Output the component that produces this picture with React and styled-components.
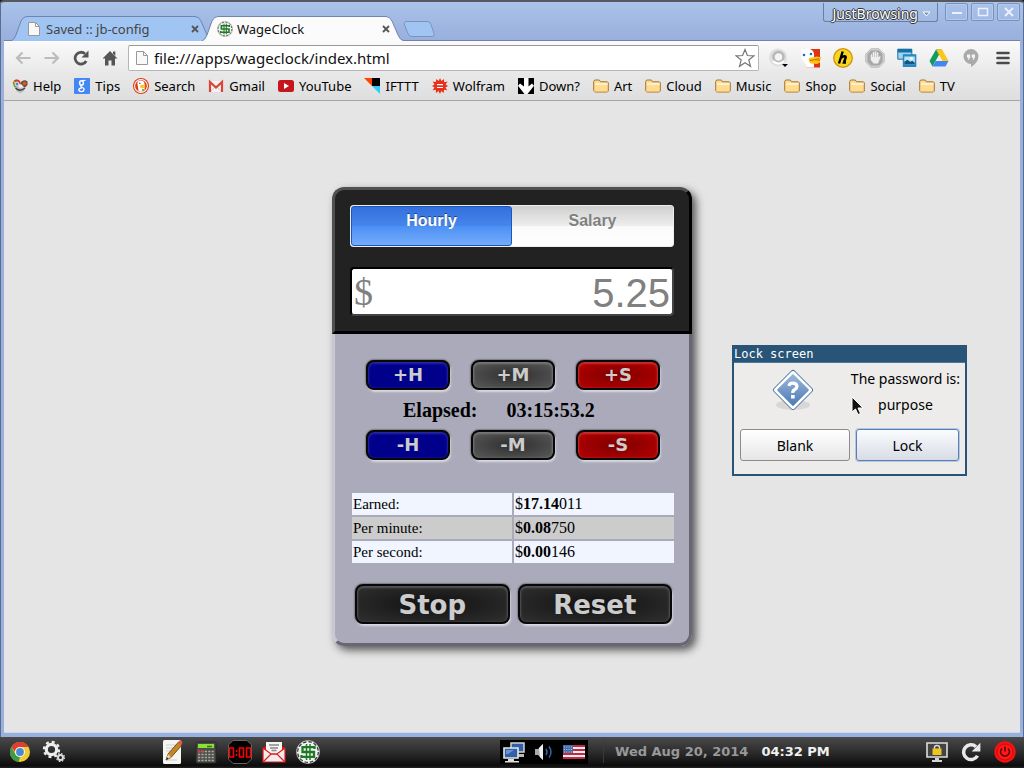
import React from "react";
import styled, { createGlobalStyle } from "styled-components";

const Global = createGlobalStyle`
  *, *::before, *::after { box-sizing: border-box; }
  body { margin: 0; background: #1a1a1a; }
  button, input { font: inherit; margin: 0; }
  svg { display: block; flex: none; }
`;

const ui = `"Noto Sans", "Open Sans", sans-serif`;

/* ---------- frame ---------- */
const Desktop = styled.div`
  display: flex;
  flex-direction: column;
  min-height: 100vh;
  font-family: ${ui};
  font-size: 13px;
  color: #000;
`;
const BrowserWindow = styled.section`
  position: relative;
  flex: 1;
  display: flex;
  flex-direction: column;
  padding: 0 4px 4px;
  border-top: 2px solid #55585e;
  border-radius: 4px 4px 0 0;
  background: #9ab0de linear-gradient(#a9c3ea, #99aedc) top / 100% 39px no-repeat;
  box-shadow: inset 1px 0 #5c6c8c, inset -1px 0 #5c6c8c;
`;
const TitleBar = styled.header`
  display: flex;
  justify-content: space-between;
  align-items: flex-start;
  height: 38px;
`;
const TabStrip = styled.nav`
  display: flex;
  align-items: flex-end;
  height: 39px;
  padding-left: 7px;
`;
const Tab = styled.div`
  position: relative;
  z-index: ${(p) => (p.$active ? 2 : 1)};
  display: flex;
  align-items: center;
  width: 202px;
  height: 25px;
  margin-right: -11px;
  padding: 0 14px 0 15px;
`;
const TabShape = styled.svg`
  position: absolute;
  inset: 0;
  z-index: -1;
  width: 100%;
  height: 100%;
`;
const TabTitle = styled.button`
  display: flex;
  flex: 1;
  align-items: center;
  gap: 4px;
  padding: 0;
  border: 0;
  background: none;
  color: ${(p) => (p.$active ? "#111" : "#444")};
  line-height: 20px;
`;
const TabClose = styled.button`
  padding: 0;
  border: 0;
  background: none;
`;
const NewTab = styled.button`
  margin: 0 0 4px 10px;
  padding: 0;
  border: 0;
  background: none;
`;
const WindowControls = styled.div`
  display: flex;
  gap: 3px;
  padding-top: 1px;
`;
const ProfileButton = styled.button`
  display: flex;
  align-items: center;
  gap: 4px;
  height: 19px;
  margin-right: 4px;
  padding: 3px 6px 0 8px;
  border: 1px solid #6d7da0;
  border-top: 0;
  border-radius: 0 0 3px 3px;
  background: none;
  color: #fff;
  line-height: 18px;
  font-size: 14px;
  text-shadow: 1px 0 #333, -1px 0 #333, 0 1px #333, 0 -1px #333;
`;
const WindowButton = styled.button`
  display: grid;
  place-items: center;
  width: 23px;
  height: 18px;
  padding: 0;
  border: 1px solid #7b90ba;
  border-radius: 2px;
  background: none;
  box-shadow: inset 0 0 0 1px #b4c9ee;
`;

/* ---------- toolbar ---------- */
const Toolbar = styled.div`
  display: flex;
  align-items: center;
  height: 34px;
  padding: 0 7px 0 9px;
  border-top: 1px solid #7183ab;
  background: linear-gradient(#fafafa, #e8e8e8);
`;
const NavGroup = styled.div`
  display: flex;
  gap: 9px;
  margin-right: 8px;
`;
const IconButton = styled.button`
  display: grid;
  place-items: center;
  width: 20px;
  height: 22px;
  padding: 0;
  border: 0;
  background: none;
`;
const AddressBar = styled.label`
  display: flex;
  flex: 1;
  align-items: center;
  gap: 4px;
  height: 26px;
  padding: 0 3px 0 5px;
  border: 1px solid #b5b5b5;
  border-top-color: #999;
  border-radius: 2px;
  background: #fff;
`;
const AddressInput = styled.input`
  flex: 1;
  min-width: 0;
  padding: 0;
  border: 0;
  outline: 0;
  background: none;
  font-size: 15px;
  color: #111;
`;
const Extensions = styled.div`
  display: flex;
  gap: 12px;
  margin-left: 10px;
`;
const Bookmarks = styled.nav`
  display: flex;
  align-items: center;
  gap: 13px;
  height: 27px;
  padding: 0 8px 3px;
  border-bottom: 1px solid #a5a5a5;
  background: linear-gradient(#e8e8e8, #dedede);
`;
const Bookmark = styled.a`
  display: flex;
  align-items: center;
  gap: 5px;
  color: #000;
  text-decoration: none;
  white-space: nowrap;
  line-height: 20px;
`;

/* ---------- page ---------- */
const Page = styled.main`
  flex: 1;
  padding: 86px 0;
  border-bottom: 1px solid #cdd6ea;
  background: #e5e5e5;
`;
const Calculator = styled.section`
  display: flex;
  flex-direction: column;
  width: 360px;
  margin: 0 auto;
  border-radius: 12px;
  box-shadow: 4px 4px 9px #555;
  font-family: "Liberation Serif", serif;
`;
const Display = styled.div`
  display: flex;
  flex-direction: column;
  gap: 20px;
  padding: 15px;
  border: 3px solid;
  border-color: #505050 #000 #000 #505050;
  border-radius: 12px 12px 0 0;
  background: #222;
`;
const Segments = styled.div`
  display: flex;
  height: 42px;
  border: 1px solid #eee;
  border-radius: 3px;
  background: linear-gradient(#cfcfcf, #eee 50%, #fafafa 50%, #fff);
`;
const Segment = styled.button`
  flex: 1;
  padding: 0 0 10px;
  border: 1px solid ${(p) => (p.$on ? "#1a57bd" : "transparent")};
  border-radius: 3px;
  background: ${(p) => (p.$on ? "linear-gradient(#3470dc, #4586ec 50%, #4b90f4 50%, #76abfa)" : "none")};
  color: ${(p) => (p.$on ? "#fff" : "#808080")};
  font: bold 16px/20px "Liberation Sans", sans-serif;
  text-shadow: ${(p) => (p.$on ? "0 -1px #1d3f7d" : "0 1px #fff")};
`;
const RateField = styled.label`
  display: flex;
  align-items: center;
  height: 49px;
  padding: 0 2px;
  border: 2px solid;
  border-color: #000 #444 #444 #000;
  border-radius: 4px;
  background: #fff;
  color: #808080;
  font-size: 38px;
`;
const RateInput = styled.input`
  flex: 1;
  min-width: 0;
  padding: 2px 0 0;
  border: 0;
  outline: 0;
  background: none;
  color: #808080;
  font: 40px/44px "Liberation Sans", sans-serif;
  text-align: right;
`;
const Controls = styled.div`
  padding: 26px 14px 19px 16px;
  border: 3px solid;
  border-color: #aaaaba #666675 #666675 #c8c8d2;
  border-top: 0;
  border-radius: 0 0 12px 12px;
  background: #aaaaba;
`;
const AdjustRow = styled.div`
  display: flex;
  gap: 21px;
  padding: 0 15px;
`;
const tones = {
  blue: "#00008b",
  gray: "radial-gradient(ellipse, #333 10%, #5a5a5a)",
  red: "radial-gradient(ellipse, #800000 5%, #b80000)",
  black: "radial-gradient(ellipse, #141414 10%, #303030)",
};
const edges = { blue: "#2626a0", gray: "#777", red: "#c63030", black: "#555" };
const PushButton = styled.button`
  flex: 1;
  height: ${(p) => (p.$large ? 40 : 30)}px;
  padding: ${(p) => (p.$large ? 2 : 0)}px 0 0;
  border: 2px solid #080808;
  border-radius: 8px;
  background: ${(p) => tones[p.$tone]};
  box-shadow: inset 0 1px 2px 1px ${(p) => edges[p.$tone]}, 1px 2px 2px #dcdce6, 0 0 2px #111;
  color: #ccc;
  font: bold ${(p) => (p.$large ? 26 : 18)}px/24px "DejaVu Sans", sans-serif;
`;
const Elapsed = styled.div`
  display: flex;
  gap: 29px;
  padding-left: 52px;
  font-size: 20px;
  font-weight: bold;
  line-height: 40px;
`;
const Earnings = styled.table`
  width: 322px;
  margin: 33px 0 21px 1px;
  border-collapse: collapse;
  table-layout: fixed;
`;
const EarningsRow = styled.tr`
  background: ${(p) => (p.$shade ? "#ccc" : "#f0f5ff")};
  border-bottom: 2px solid #aaaaba;
  &:last-child { border-bottom: 0; }
`;
const RowName = styled.th`
  padding: 1px;
  font-size: 15px;
  font-weight: normal;
  line-height: 20px;
  text-align: left;
`;
const RowValue = styled.td`
  padding: 1px;
  border-left: 2px solid #aaaaba;
  font-size: 16px;
  line-height: 20px;
`;
const ActionRow = styled.div`
  display: flex;
  gap: 8px;
  padding: 0 3px 0 4px;
`;

/* ---------- lock dialog ---------- */
const Dialog = styled.section`
  position: absolute;
  top: 343px;
  right: 57px;
  width: 235px;
  border: 2px solid #285577;
  border-top-width: 1px;
  background: #edecea;
`;
const DialogTitle = styled.h2`
  margin: 0;
  border-bottom: 1px solid #4c7899;
  background: #285577;
  color: #fff;
  font: normal 12px/16px "DejaVu Sans Mono", monospace;
`;
const DialogMessage = styled.div`
  display: flex;
  justify-content: space-between;
  padding: 3px 5px 0 37px;
`;
const DialogText = styled.p`
  margin: 0;
  font-size: 14px;
  line-height: 26px;
  text-align: center;
  white-space: pre-line;
`;
const DialogActions = styled.div`
  display: flex;
  gap: 6px;
  padding: 11px 6px 13px;
`;
const DialogButton = styled.button`
  flex: ${(p) => (p.$focus ? "0 0 103px" : "1")};
  height: 32px;
  border: 1px solid ${(p) => (p.$focus ? "#5a7fb4" : "#8c8c8c")};
  border-radius: 3px;
  background: ${(p) => (p.$focus ? "linear-gradient(#fafcff, #d8dce4)" : "linear-gradient(#fff, #e6e6e6)")};
  box-shadow: ${(p) => (p.$focus ? "0 0 0 1px #b4c8e4" : "none")};
  color: #000;
  font-size: 14px;
`;
const Pointer = styled.svg`
  position: absolute;
  left: 117px;
  top: 50px;
`;

/* ---------- taskbar ---------- */
const Taskbar = styled.footer`
  display: flex;
  align-items: center;
  height: 32px;
  padding: 0 7px 2px 8px;
  background: linear-gradient(#4a4a4a, #2a2a2a 50%, #0c0c0c 90%, #303030);
`;
const Launchers = styled.div`
  display: flex;
  align-items: center;
  gap: 10px;
`;
const Shortcuts = styled(Launchers)`
  margin-left: 94px;
`;
const TaskButton = styled(IconButton)`
  width: 24px;
  height: 24px;
`;
const Tray = styled.div`
  display: flex;
  align-items: center;
  gap: 8px;
  height: 24px;
  margin-left: 180px;
  padding: 0 3px;
  background: #000;
`;
const Clock = styled.time`
  display: flex;
  gap: 13px;
  margin-left: 15px;
  padding-left: 11px;
  border-left: 1px solid #3a3a3a;
  color: #999;
  font: bold 13px/22px "DejaVu Sans", sans-serif;
`;
const Now = styled.span`
  color: #f0f0f0;
`;
const Session = styled(Launchers)`
  margin-left: auto;
`;

/* ---------- icons ---------- */
const Icon = ({ s = 16, w, h, vb, children }) => (
  <svg width={w || s} height={h || s} viewBox={vb || `0 0 ${w || s} ${h || s}`} fill="none" aria-hidden="true">{children}</svg>
);
const PageIcon = ({ c = "#999" }) => (
  <Icon><path d="M2.5 1.5h7l4 4v9h-11z" fill="#f8f8f8" stroke={c} /><path d="M9.5 1.5v4h4" stroke={c} /></Icon>
);
const Dollar = ({ s = 16 }) => (
  <Icon s={s} vb="0 0 24 24">
    <circle cx="12" cy="12" r="11.5" fill="#f2f2f2" stroke="#aaa" strokeWidth=".8" />
    <circle cx="12" cy="12" r="10.3" stroke="#333" strokeWidth="1.2" strokeDasharray="3.400 2" />
    <path d="M18.500 9V7.200H6.500V12h11.500v4.800H5.500V15" stroke="#1c7a22" strokeWidth="2.300" />
    <path d="M10.500 4v16M14 4v16" stroke="#1c7a22" strokeWidth="1.500" />
  </Icon>
);
const Cross = () => <Icon s={8}><path d="M1 1l6 6M7 1L1 7" stroke="#555" strokeWidth="1.8" /></Icon>;
const Arrow = ({ flip }) => (
  <Icon><g transform={flip ? "matrix(-1 0 0 1 16 0)" : undefined}><path d="M7.5 2.5L2 8l5.5 5.500M2 8h13.500" stroke="#bcbcbc" strokeWidth="2.2" /></g></Icon>
);
const Reload = ({ s = 16, c = "#555" }) => (
  <Icon s={s} vb="0 0 16 16"><path d="M13.200 11A5.900 5.900 0 1 1 12 3.800" stroke={c} strokeWidth="2.800" /><path d="M15.500 .5v7H8.500z" fill={c} /></Icon>
);
const Home = () => (
  <Icon><path d="M8 1l7.500 7.500H13V15.500H9.500v-5h-3v5H3V8.500H.5z" fill="#555" /><path d="M11 1.500h2.300V6L11 3.500z" fill="#555" /></Icon>
);
const Star = () => (
  <Icon s={20}><path d="M10 1.500l2.400 6 6.400.4-5 4.100 1.700 6.300L10 14.800l-5.500 3.500L6.200 12l-5-4.100 6.400-.4z" fill="#fff" stroke="#777" strokeWidth="1.200" /></Icon>
);
const Folder = () => (
  <Icon>
    <path d="M.7 12.500V3.500l1-1.500h4.600l1.200 1.800h6.800l1 1V13l-1 1H1.700z" fill="#ffdc94" stroke="#a5742f" />
    <path d="M2 6h12.500" stroke="#fff0c8" strokeWidth="2" /><path d="M1.200 13.500h13.500" stroke="#edb85c" />
  </Icon>
);
const Duck = ({ round }) => (
  <Icon s={round ? 16 : 20} vb="0 0 20 20">
    {round ? <><circle cx="10" cy="10" r="10" fill="#df3b16" /><circle cx="10" cy="10" r="8" stroke="#fff" strokeWidth="1.300" /></> : <path d="M4 1h15v18.500H5z" fill="#de3413" />}
    {round ? (
      <><path d="M7 16.500L5.500 7q0-4 4-4 5 0 5 5v8q-3 2-7.500.5" fill="#fff" /><path d="M9 9l6-1 1 1.500-4 .8 4 1-2 1.500-5-1z" fill="#fdc20f" /><path d="M11 13l4 2-3 2z" fill="#48a832" /><circle cx="8.500" cy="6.500" r="1" fill="#245d9b" /></>
    ) : (
      <><path d="M0 1h9q5 2 4 8v10.500H5Q4 13 1 12z" fill="#fff" /><path d="M8 10l8-1.500 4 .8v1.900l-5 1.300h4v2l-3 1.500-6-.5q-3-2-2-5.500" fill="#fdc20f" /><path d="M9 12.500l6-1 3-1" stroke="#b86b0d" /><circle cx="3" cy="7" r="1.300" fill="#246ba9" /><circle cx="10" cy="6" r="1.300" fill="#246ba9" /></>
    )}
  </Icon>
);
const Help = () => (
  <Icon>
    <path d="M1 3q3-3 7 0l1 4-6 3-2-3z" fill="#e0a82c" /><path d="M2 2.500q3-2 6 .5l1 3-3 1z" fill="#d23b2c" /><path d="M.5 4l2 5 3 .5V6z" fill="#4a9c55" />
    <path d="M9 4q3-3 6.500-.5V7L13 9.500 9 7z" fill="#5d4a40" /><circle cx="12.500" cy="5.500" r="2" fill="#d4592b" />
    <circle cx="5" cy="6" r="2" fill="#4a8ad0" stroke="#eee" /><path d="M4 8.500q4 1.500 9 .5l-1 4-4 2.300-3.500-2.300z" fill="#b9bcc0" />
    <path d="M3.500 10q4.500 4.500 9.500 0" stroke="#444" strokeWidth="1.500" /><path d="M7 6.500l3 0 1 3H7z" fill="#f0f0f0" />
  </Icon>
);
const Google = () => (
  <Icon><rect width="16" height="16" rx="1" fill="#4387f4" /><ellipse cx="7.500" cy="5" rx="1.900" ry="2.200" stroke="#fff" strokeWidth="1.500" /><path d="M8 2.400h3.500" stroke="#fff" /><path d="M7.500 7.300q-1.500 1 0 1.700 2.800 1 2.600 2.600-.4 2-2.800 2-2.500-.2-2.500-1.800.2-1.700 3.200-1.900" stroke="#fff" strokeWidth="1.300" /></Icon>
);
const Gmail = () => (
  <Icon><rect x="1" y="3" width="14" height="11" fill="#f2f2f2" /><path d="M3 13l5-5 5 5" stroke="#ccc" /><path d="M2 14V4l6 5.500L14 4v10" stroke="#db4437" strokeWidth="2.200" /></Icon>
);
const YouTube = () => (
  <Icon><rect y="2" width="16" height="12" rx="2.500" fill="#c4161c" /><path d="M6 5l5 3-5 3z" fill="#fff" /></Icon>
);
const Ifttt = () => (
  <Icon><path d="M0 0h8v8z" fill="#ff4500" /><path d="M8 0h8v8H8z" fill="#000" /><path d="M8 8h8v8z" fill="#33ccff" /></Icon>
);
const Wolfram = () => (
  <Icon><path d="M8 0l1.400 3L12 1l.2 3.200 3.300-.6-1.800 2.800L16 8l-2.700 1.400 2 2.800-3.300-.4L11.700 15 9.300 13 8 16l-1.500-3L4 15l-.2-3.300-3.300.5 2-2.800L0 8l2.500-1.600L.6 3.600l3.200.5L4.300 1 6.700 3z" fill="#e7301c" /><path d="M5 6.700h6M5 9.500h6" stroke="#fff" strokeWidth="1.200" /></Icon>
);
const Down = () => (
  <Icon><path d="M0 0h16v16H0z" fill="#000" /><path d="M6 0h4.500v8.500L14 5.500l2 2.300L9.500 16h-3L0 7.800l2-2.300 4 3z" fill="#fff" /></Icon>
);
const Magnifier = () => (
  <Icon s={20}><circle cx="9" cy="9.500" r="9" fill="#dedede" /><circle cx="9.500" cy="9" r="5" fill="#f4f4f4" stroke="#b8b8b8" strokeWidth="2.500" /><path d="M4 13q5 5 11 0" stroke="#fff" strokeWidth="2" /><path d="M13 16h6l-3 3z" fill="#000" /></Icon>
);
const HoverH = () => (
  <Icon s={20}><circle cx="10" cy="10" r="9.300" fill="#f8d71e" stroke="#d2910e" strokeWidth="1.300" /><path d="M9.700 3.500L6 15.500M7.700 10q5-3.500 5-.5l-1.700 5h2" stroke="#000" strokeWidth="2.400" /></Icon>
);
const StopHand = () => (
  <Icon s={20}><path d="M6 .8h8L19.200 6v8L14 19.200H6L.8 14V6z" fill="#a8a8a8" stroke="#bbb" /><path d="M6 1.800h8L18.200 6v8L14 18.200H6L1.800 14V6z" stroke="#ddd" /><path d="M6.500 12V7M8.500 10V4.500M10.500 10V4M12.500 10V5" stroke="#eee" strokeWidth="1.500" strokeLinecap="round" /><path d="M6 9h7.500l1.500-1q1 0 .2 2L13 15.500H8.500L6 12z" fill="#eee" /></Icon>
);
const Pictures = () => (
  <Icon s={20}><path d="M.8 1.200h14v10H.8z" fill="#a3d4ee" stroke="#176fa6" /><path d="M.8 1h14v3.500H.8z" fill="#176fa6" /><path d="M5.800 6.200h13.500V19H5.800z" fill="#2388c8" /><path d="M7.300 8.500h10.500v7.800H7.300z" fill="#bfe2f5" /><path d="M7.300 16.300v-2.500l3-2 3 2 2-1 2.500 2v1.500z" fill="#125783" /><circle cx="14.500" cy="10.500" r="1.200" fill="#fff" /></Icon>
);
const Drive = () => (
  <Icon s={20}><path d="M7 1.500h6L6.500 13 3.500 18.500.5 13z" fill="#149b5f" /><path d="M7 1.500h6l6.500 11.500h-6z" fill="#fbc617" /><path d="M6.700 13h12.800l-3 5.500h-13z" fill="#4385f1" /></Icon>
);
const Hangouts = () => (
  <Icon s={20}><path d="M10 1a7.500 7.500 0 0 0 0 15v3q7-4 7.500-10.500A7.500 7.500 0 0 0 10 1" fill="#aaa" /><path d="M6 6.500h3.200v3L7.500 12H6.800l.8-2.300H6zM10.800 6.500H14v3L12.300 12h-.7l.8-2.300h-1.600z" fill="#f4f4f4" /></Icon>
);
const Menu = () => <Icon s={20}><path d="M4.500 5h11M4.500 10h11M4.500 15h11" stroke="#4a4a4a" strokeWidth="2.600" strokeLinecap="round" /></Icon>;
const Question = () => (
  <Icon s={44} vb="0 -1 44 44">
    <defs><linearGradient id="qFill" x2="1" y2="1"><stop stopColor="#9db8d9" /><stop offset="1" stopColor="#4a7ab6" /></linearGradient></defs>
    <ellipse cx="22" cy="38" rx="17" ry="5" fill="#d8d7d6" />
    <rect x="7" y="9" width="29" height="29" rx="2.500" transform="rotate(45 22 23) translate(.5 -.5)" fill="#fff" stroke="#4d78ae" />
    <rect x="10" y="12" width="23" height="23" rx="1" transform="rotate(45 22 23) translate(.5 -.5)" fill="url(#qFill)" />
    <path d="M18 19q.3-2.800 4-2.800t4 3.100q0 2-2.200 3.200T21.800 26" stroke="#fff" strokeWidth="3.200" /><path d="M20 28h3.700v3.500H20z" fill="#fff" />
  </Icon>
);
const Chrome = () => (
  <Icon s={20}><circle cx="10" cy="10" r="10" fill="#efce35" /><path d="M1.300 5A10 10 0 0 1 18.700 5H10a5 5 0 0 0-5 5z" fill="#db4132" /><path d="M1.300 5l4.200 7.500Q7 15 10 15l-1.500 5A10 10 0 0 1 1.300 5" fill="#3e9a46" /><circle cx="10" cy="10" r="5" fill="#f3f3f3" /><circle cx="10" cy="10" r="3.900" fill="#4a8ad0" /></Icon>
);
const Gears = () => (
  <Icon s={24}><circle cx="9.500" cy="9.500" r="5.200" stroke="#ededed" strokeWidth="3.200" /><circle cx="9.500" cy="9.500" r="7.600" stroke="#ededed" strokeWidth="2.200" strokeDasharray="3 2.970" /><circle cx="18.500" cy="17.500" r="2.500" stroke="#ddd" strokeWidth="2" /><circle cx="18.500" cy="17.500" r="4" stroke="#ddd" strokeWidth="1.200" strokeDasharray="1.600 1.540" /></Icon>
);
const Notepad = () => (
  <Icon s={24}><rect x="3" y="0" width="18" height="24" rx="1.500" fill="#f5f5f2" /><path d="M6 5h10M6 8h8M6 11h6M6 20h11" stroke="#ccc" /><path d="M6 20l2-6L18.500 2l3.500 3-11 12.500z" fill="#ca8523" stroke="#583817" strokeWidth=".8" /><path d="M6 20l2-6 3 3z" fill="#e8cfa5" /><path d="M6 20l1-2.500 1.500 1z" fill="#111" /><path d="M18 2.500L19.500.8q2-.8 3 1.800L21.500 5z" fill="#dc5b50" /></Icon>
);
const Calc = () => (
  <Icon s={24}><rect x="2" y="2" width="20" height="21" rx="1.500" fill="#4c4f49" stroke="#252725" /><path d="M4 4h16v4H4z" fill="#8be234" /><path d="M13 6.500h5" stroke="#346f12" strokeWidth="1.500" /><path d="M4 11.500h16M4 14.500h16M4 17.500h16M4 20.500h16" stroke="#a7a9a4" strokeWidth="1.600" strokeDasharray="2.200 1.200" /><path d="M4 11.500h6" stroke="#e53535" strokeWidth="2" strokeDasharray="2.200 1.200" /></Icon>
);
const Timer = () => (
  <Icon s={24}><path d="M5 .5h14L23.500 5v14L19 23.500H5L.5 19V5z" fill="#000" stroke="#777" strokeWidth=".8" /><path d="M1.500 8h4v9h-4zM11.500 8h4v9h-4zM18.500 8h4v9h-4zM8.500 10v2M8.500 14v2" stroke="#f00" strokeWidth="1.500" /></Icon>
);
const Mail = () => (
  <Icon s={24}><path d="M1 8l11-6 11 6v13H1z" fill="#e41818" /><path d="M4 2h16v13H4z" fill="#f5f5f5" /><path d="M7 5h10M8 8h8M9.500 10.500h5" stroke="#888" strokeWidth="1.300" /><path d="M1 8l8 6h6l8-6v14H1z" fill="#eee" stroke="#e41818" strokeWidth="1.200" /><path d="M1 22l8-8h6l8 8" stroke="#e41818" strokeWidth="1.200" /></Icon>
);
const Network = () => (
  <Icon s={22}><path d="M8 2h13v9H8z" fill="#315fa8" stroke="#d6d6d0" strokeWidth="1.500" /><path d="M12 13h9v3h-9z" fill="#bbb" /><path d="M1 7h14v10H1z" fill="#315fa8" stroke="#e8e8e2" strokeWidth="1.600" /><path d="M3 9h8l-6 4H3z" fill="#6b93cc" /><path d="M5 18h6v2H5zM2 20h14v1.500H2z" fill="#ddd" /></Icon>
);
const Speaker = () => (
  <Icon s={22}><path d="M2 8h3l5-5v16l-5-5H2z" fill="#aaa" /><path d="M6 7l4-4v16l-3-3z" fill="#eee" /><path d="M13 8q2 3 0 6M16 5.500q4 5.500 0 11" stroke="#34639d" strokeWidth="1.500" /></Icon>
);
const Flag = () => (
  <Icon w={22} h={14}><path d="M0 0h22v14H0z" fill="#eee" /><path d="M0 1h22M0 5h22M0 9h22M0 13h22" stroke="#c82742" strokeWidth="2" /><path d="M0 0h10v8H0z" fill="#476ba8" /><path d="M1 2h8M1 4.500h8M1 7h8" stroke="#bacce7" strokeDasharray="1 1.300" /></Icon>
);
const LockScreen = () => (
  <Icon s={24}><path d="M2 3h20v14H2z" fill="#444" stroke="#ddd" strokeWidth="1.600" /><path d="M9.500 9V7.500q0-2 2.500-2t2.500 2V9" stroke="#ddd" strokeWidth="1.400" /><path d="M7.500 8.500h9V15h-9z" fill="#edc51c" /><path d="M10 18h4v2h3v2H7v-2h3z" fill="#d4d4d4" /></Icon>
);
const Power = () => (
  <Icon s={22}><circle cx="11" cy="11" r="10.700" fill="#f91111" /><circle cx="11" cy="11" r="8" fill="#ff1919" stroke="#cf0909" /><path d="M8 7.500a4.400 4.400 0 1 0 6 0M11 5.500v5" stroke="#610606" strokeWidth="1.600" /></Icon>
);

/* ---------- data ---------- */
const folders = ["Art", "Cloud", "Music", "Shop", "Social", "TV"];
const bookmarks = [
  ["Help", Help], ["Tips", Google], ["Search", () => <Duck round />], ["Gmail", Gmail], ["YouTube", YouTube],
  ["IFTTT", Ifttt], ["Wolfram", Wolfram], ["Down?", Down], ...folders.map((f) => [f, Folder]),
];
const extensions = [
  ["Search tools", Magnifier], ["DuckDuckGo", Duck], ["Hover", HoverH], ["Blocker", StopHand],
  ["Pictures", Pictures], ["Drive", Drive], ["Hangouts", Hangouts], ["Menu", Menu],
];
const earnings = [["Earned:", "17.14", "011"], ["Per minute:", "0.08", "750"], ["Per second:", "0.00", "146"]];
const units = [["H", "blue"], ["M", "gray"], ["S", "red"]];

function BrowserTab({ title, icon, active }) {
  return (
    <Tab $active={active}>
      <TabShape viewBox="0 0 202 25" preserveAspectRatio="none" aria-hidden="true">
        <path d="M0 25Q3 24 5 19L10 5Q12 .5 16 .5H184Q188 .5 190 5L196 19Q198 24 202 25" fill={active ? "#fbfbfb" : "#a1c5f3"} stroke="#7084ac" />
      </TabShape>
      <TabTitle type="button" $active={active}>{icon}{title}</TabTitle>
      <TabClose type="button" aria-label={`Close ${title}`}><Cross /></TabClose>
    </Tab>
  );
}

function Adjust({ sign }) {
  return (
    <AdjustRow>
      {units.map(([u, tone]) => <PushButton key={u} type="button" $tone={tone}>{sign}{u}</PushButton>)}
    </AdjustRow>
  );
}

export default function App() {
  return (
    <Desktop>
      <Global />
      <BrowserWindow>
        <TitleBar>
          <TabStrip>
            <BrowserTab title="Saved :: jb-config" icon={<PageIcon />} />
            <BrowserTab title="WageClock" icon={<Dollar />} active />
            <NewTab type="button" aria-label="New tab">
              <Icon w={32} h={16}><path d="M4 .5h20q3 0 4 3l3 9q1 3-2 3H9q-3 0-4-3L1.500 4Q.5.500 4 .5" fill="#a1c5f3" stroke="#7b92bf" /></Icon>
            </NewTab>
          </TabStrip>
          <WindowControls>
            <ProfileButton type="button">JustBrowsing<Icon w={9} h={6}><path d="M1 1h7L4.500 5z" fill="#7f93bb" stroke="#fff" /></Icon></ProfileButton>
            <WindowButton type="button" aria-label="Minimize"><Icon s={12}><path d="M1 7h10" stroke="#eef" strokeWidth="2" /></Icon></WindowButton>
            <WindowButton type="button" aria-label="Maximize"><Icon s={12}><rect x="1.500" y="2.500" width="9" height="7" stroke="#eef" strokeWidth="1.500" /></Icon></WindowButton>
            <WindowButton type="button" aria-label="Close"><Icon s={12}><path d="M2 2l8 8M10 2l-8 8" stroke="#eef" strokeWidth="2" /></Icon></WindowButton>
          </WindowControls>
        </TitleBar>
        <Toolbar>
          <NavGroup>
            <IconButton type="button" aria-label="Back"><Arrow /></IconButton>
            <IconButton type="button" aria-label="Forward"><Arrow flip /></IconButton>
            <IconButton type="button" aria-label="Reload"><Reload /></IconButton>
            <IconButton type="button" aria-label="Home"><Home /></IconButton>
          </NavGroup>
          <AddressBar>
            <PageIcon />
            <AddressInput aria-label="Address" defaultValue="file:///apps/wageclock/index.html" />
            <Star />
          </AddressBar>
          <Extensions>
            {extensions.map(([name, Glyph]) => <IconButton key={name} type="button" aria-label={name}><Glyph /></IconButton>)}
          </Extensions>
        </Toolbar>
        <Bookmarks>
          {bookmarks.map(([name, Glyph]) => <Bookmark key={name} href="#"><Glyph />{name}</Bookmark>)}
        </Bookmarks>
        <Page>
          <Calculator>
            <Display>
              <Segments>
                <Segment type="button" $on>Hourly</Segment>
                <Segment type="button">Salary</Segment>
              </Segments>
              <RateField>$<RateInput aria-label="Hourly rate" defaultValue="5.25" /></RateField>
            </Display>
            <Controls>
              <Adjust sign="+" />
              <Elapsed><span>Elapsed:</span><span>03:15:53.2</span></Elapsed>
              <Adjust sign="-" />
              <Earnings>
                <tbody>
                  {earnings.map(([name, main, rest], i) => (
                    <EarningsRow key={name} $shade={i === 1}>
                      <RowName scope="row">{name}</RowName>
                      <RowValue>$<b>{main}</b>{rest}</RowValue>
                    </EarningsRow>
                  ))}
                </tbody>
              </Earnings>
              <ActionRow>
                <PushButton type="button" $large $tone="black">Stop</PushButton>
                <PushButton type="button" $large $tone="black">Reset</PushButton>
              </ActionRow>
            </Controls>
          </Calculator>
        </Page>
        <Dialog aria-label="Lock screen">
          <DialogTitle>Lock screen</DialogTitle>
          <DialogMessage>
            <Question />
            <DialogText>{"The password is:\npurpose"}</DialogText>
          </DialogMessage>
          <DialogActions>
            <DialogButton type="button">Blank</DialogButton>
            <DialogButton type="button" $focus>Lock</DialogButton>
          </DialogActions>
          <Pointer width="14" height="20" viewBox="0 0 14 20" aria-hidden="true">
            <path d="M1 1v15l3.500-3 2.500 5.500 2.500-1L7 12h5z" fill="#111" stroke="#fff" />
          </Pointer>
        </Dialog>
      </BrowserWindow>
      <Taskbar>
        <Launchers>
          <TaskButton type="button" aria-label="Chrome"><Chrome /></TaskButton>
          <TaskButton type="button" aria-label="Settings"><Gears /></TaskButton>
        </Launchers>
        <Shortcuts>
          <TaskButton type="button" aria-label="Notes"><Notepad /></TaskButton>
          <TaskButton type="button" aria-label="Calculator"><Calc /></TaskButton>
          <TaskButton type="button" aria-label="Timer"><Timer /></TaskButton>
          <TaskButton type="button" aria-label="Mail"><Mail /></TaskButton>
          <TaskButton type="button" aria-label="WageClock"><Dollar s={24} /></TaskButton>
        </Shortcuts>
        <Tray><Network /><Speaker /><Flag /></Tray>
        <Clock dateTime="2014-08-20T16:32"><span>Wed Aug 20, 2014</span><Now>04:32 PM</Now></Clock>
        <Session>
          <TaskButton type="button" aria-label="Lock screen"><LockScreen /></TaskButton>
          <TaskButton type="button" aria-label="Restart"><Reload s={20} c="#e8e8e8" /></TaskButton>
          <TaskButton type="button" aria-label="Shut down"><Power /></TaskButton>
        </Session>
      </Taskbar>
    </Desktop>
  );
}
